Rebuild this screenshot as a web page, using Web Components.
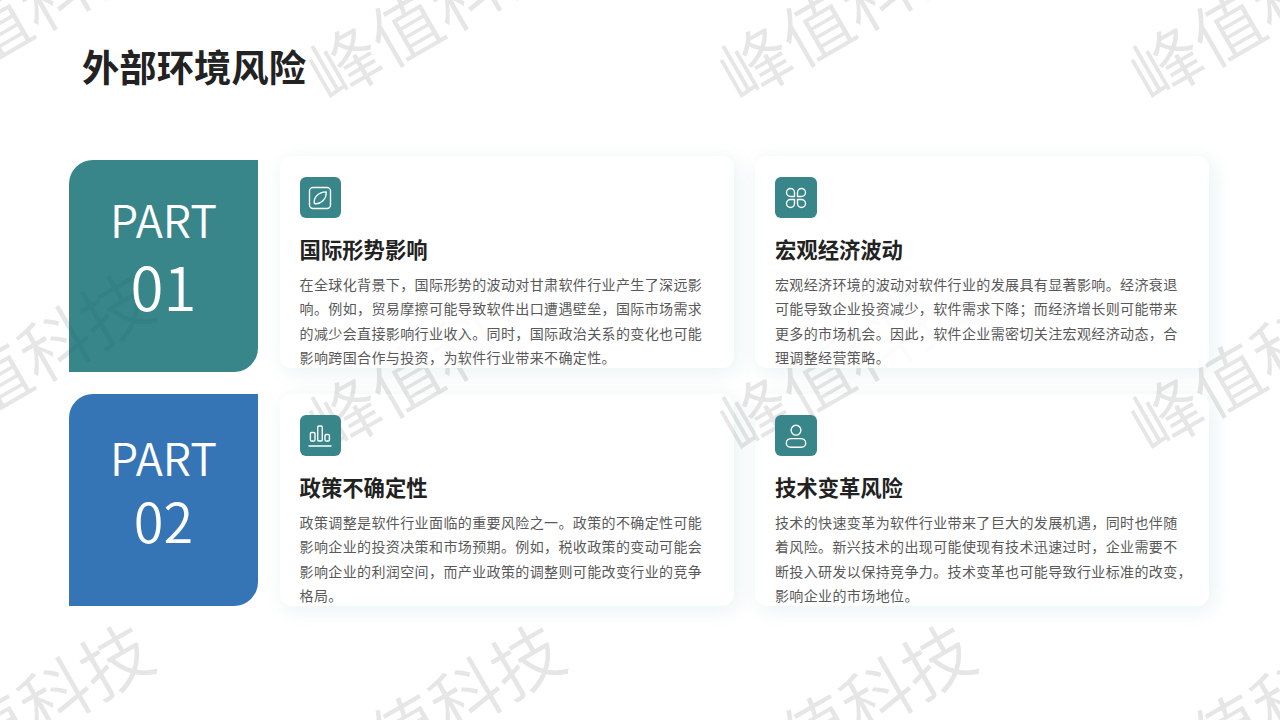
<!DOCTYPE html>
<html lang="zh-CN">
<head>
<meta charset="utf-8">
<title>外部环境风险</title>
<style>
html,body{margin:0;padding:0;background:#fff}
body{font-family:"Noto Sans CJK SC","Noto Sans",sans-serif}
</style>
</head>
<body>
<risk-page>
  <risk-watermark slot="watermark"></risk-watermark>
  <span slot="title">外部环境风险</span>
  <risk-row style="--row-h:216px;--card-bg:rgba(255,255,255,.88);--clip:inset(-30px -30px -26px -30px)">
    <part-panel slot="panel" num="01" color="rgba(6,102,109,.8)" align="end" size="60" gap="3" lift="15"></part-panel>
    <info-card icon="leaf" heading="国际形势影响">在全球化背景下，国际形势的波动对甘肃软件行业产生了深远影<br>响。例如，贸易摩擦可能导致软件出口遭遇壁垒，国际市场需求<br>的减少会直接影响行业收入。同时，国际政治关系的变化也可能<br>影响跨国合作与投资，为软件行业带来不确定性。</info-card>
    <info-card icon="clover" heading="宏观经济波动">宏观经济环境的波动对软件行业的发展具有显著影响。经济衰退<br>可能导致企业投资减少，软件需求下降；而经济增长则可能带来<br>更多的市场机会。因此，软件企业需密切关注宏观经济动态，合<br>理调整经营策略。</info-card>
  </risk-row>
  <risk-row style="--row-h:212px;--card-bg:transparent;--clip:none">
    <part-panel slot="panel" num="02" color="rgba(3,83,163,.8)" align="start" size="54" gap="0" lift="10"></part-panel>
    <info-card icon="bars" heading="政策不确定性">政策调整是软件行业面临的重要风险之一。政策的不确定性可能<br>影响企业的投资决策和市场预期。例如，税收政策的变动可能会<br>影响企业的利润空间，而产业政策的调整则可能改变行业的竞争<br>格局。</info-card>
    <info-card icon="user" heading="技术变革风险">技术的快速变革为软件行业带来了巨大的发展机遇，同时也伴随<br>着风险。新兴技术的出现可能使现有技术迅速过时，企业需要不<br>断投入研发以保持竞争力。技术变革也可能导致行业标准的改变，<br>影响企业的市场地位。</info-card>
  </risk-row>
</risk-page>

<template id="t-page">
  <style>
    :host{display:block;position:relative;width:1280px;height:720px;overflow:hidden;background:#fff}
    header{position:relative;z-index:1;padding:42px 0 0 82px;height:48px;margin-bottom:66px;
      font-size:37.33px;line-height:48px;font-weight:700;color:#222}
    main{position:relative;z-index:1;margin-left:69px;display:flex;flex-direction:column;gap:22px}
  </style>
  <slot name="watermark"></slot>
  <header><slot name="title"></slot></header>
  <main><slot></slot></main>
</template>

<template id="t-watermark">
  <style>
    :host{position:absolute;left:-182.5px;top:-168px;z-index:0;display:grid;
      grid-template-columns:repeat(4,411px);grid-auto-rows:351px;pointer-events:none}
    div{display:flex;align-items:center;justify-content:center}
    span{display:block;white-space:nowrap;transform:rotate(-30deg);font-size:70px;line-height:1;font-weight:350;color:#e6e6e6}
  </style>
  <div><span>峰值科技</span></div><div><span>峰值科技</span></div><div><span>峰值科技</span></div><div><span>峰值科技</span></div>
  <div><span>峰值科技</span></div><div><span>峰值科技</span></div><div><span>峰值科技</span></div><div><span>峰值科技</span></div>
  <div><span>峰值科技</span></div><div><span>峰值科技</span></div><div><span>峰值科技</span></div><div><span>峰值科技</span></div>
</template>

<template id="t-row">
  <style>
    :host{display:flex;gap:21.8px;height:var(--row-h);width:1140px}
    .p{display:flex;width:189px;margin-right:.2px}
  </style>
  <div class="p"><slot name="panel"></slot></div>
  <slot></slot>
</template>

<template id="t-panel">
  <style>
    :host{display:flex;flex-direction:column;align-items:center;justify-content:center;box-sizing:border-box;width:189px;height:212px;
      color:#fff;border-radius:24px 0 24px 0}
    .a{font-size:45px;line-height:50px;font-weight:350}
    .b{line-height:76px;font-weight:350}
  </style>
  <div class="a">PART</div>
  <div class="b"></div>
</template>

<template id="t-card">
  <style>
    :host{display:block;box-sizing:border-box;width:453.6px;height:212px;padding:21px 0 0 19.6px;
      background:var(--card-bg,#fff);border-radius:12px;clip-path:var(--clip,none);
      box-shadow:4px 4px 20px rgba(56,133,138,.11)}
    .i{width:41.6px;height:41.3px;border-radius:6px;background:#38858a;display:flex;align-items:center;justify-content:center}
    svg{width:24px;height:24px;fill:none;stroke:#fff;stroke-width:1.4;stroke-linecap:round;stroke-linejoin:round}
    h3{margin:16.7px 0 9px;font-size:21.33px;line-height:28px;font-weight:700;color:#222}
    p{margin:0;font-size:14px;line-height:24.33px;letter-spacing:.38px;color:#595959;white-space:nowrap}
  </style>
  <div class="i"></div>
  <h3></h3>
  <p><slot></slot></p>
</template>

<script>
const ICONS={
  leaf:'<rect x="1.5" y="1.5" width="21" height="21" rx="3.5"/><path d="M6.4 17.6C5.2 11.8 10 6 18.2 5.9C18.6 12.8 13 18.8 6.4 17.6Z"/>',
  clover:'<path d="M10.5 10.5H6.5A4 4 0 1 1 10.5 6.5Z"/><path d="M13.5 10.5H17.5A4 4 0 1 0 13.5 6.5Z"/><path d="M10.5 13.5H6.5A4 4 0 1 0 10.5 17.5Z"/><path d="M13.5 13.5H17.5A4 4 0 1 1 13.5 17.5Z"/>',
  bars:'<rect x="2.4" y="8.5" width="4.6" height="8.5" rx="1.2"/><rect x="9.7" y="2" width="4.6" height="15" rx="1.2"/><rect x="17" y="10.5" width="4.4" height="6.5" rx="1.2"/><path d="M1 22H23"/>',
  user:'<circle cx="12" cy="6.2" r="4.9"/><path d="M6.5 23.2A4.2 4.2 0 0 1 2.3 19C2.3 16 5 14.6 7.5 14.6H16.5C19 14.6 21.7 16 21.7 19A4.2 4.2 0 0 1 17.5 23.2Z"/>'
};
function open(el,id){const r=el.attachShadow({mode:'open'});r.appendChild(document.getElementById(id).content.cloneNode(true));return r}
customElements.define('risk-page',class extends HTMLElement{constructor(){super();open(this,'t-page')}});
customElements.define('risk-watermark',class extends HTMLElement{constructor(){super();open(this,'t-watermark')}});
customElements.define('risk-row',class extends HTMLElement{constructor(){super();open(this,'t-row')}});
customElements.define('part-panel',class extends HTMLElement{
  constructor(){super();open(this,'t-panel')}
  connectedCallback(){
    const r=this.shadowRoot,b=r.querySelector('.b');
    b.textContent=this.getAttribute('num');
    b.style.fontSize=this.getAttribute('size')+'px';
    b.style.marginTop=this.getAttribute('gap')+'px';
    this.style.paddingBottom=this.getAttribute('lift')+'px';
    this.style.background=this.getAttribute('color');
    this.style.alignSelf=this.getAttribute('align');
  }
});
customElements.define('info-card',class extends HTMLElement{
  constructor(){super();open(this,'t-card')}
  connectedCallback(){
    const r=this.shadowRoot;
    r.querySelector('h3').textContent=this.getAttribute('heading');
    r.querySelector('.i').innerHTML='<svg viewBox="0 0 24 24">'+ICONS[this.getAttribute('icon')]+'</svg>';
  }
});
</script>
</body>
</html>
